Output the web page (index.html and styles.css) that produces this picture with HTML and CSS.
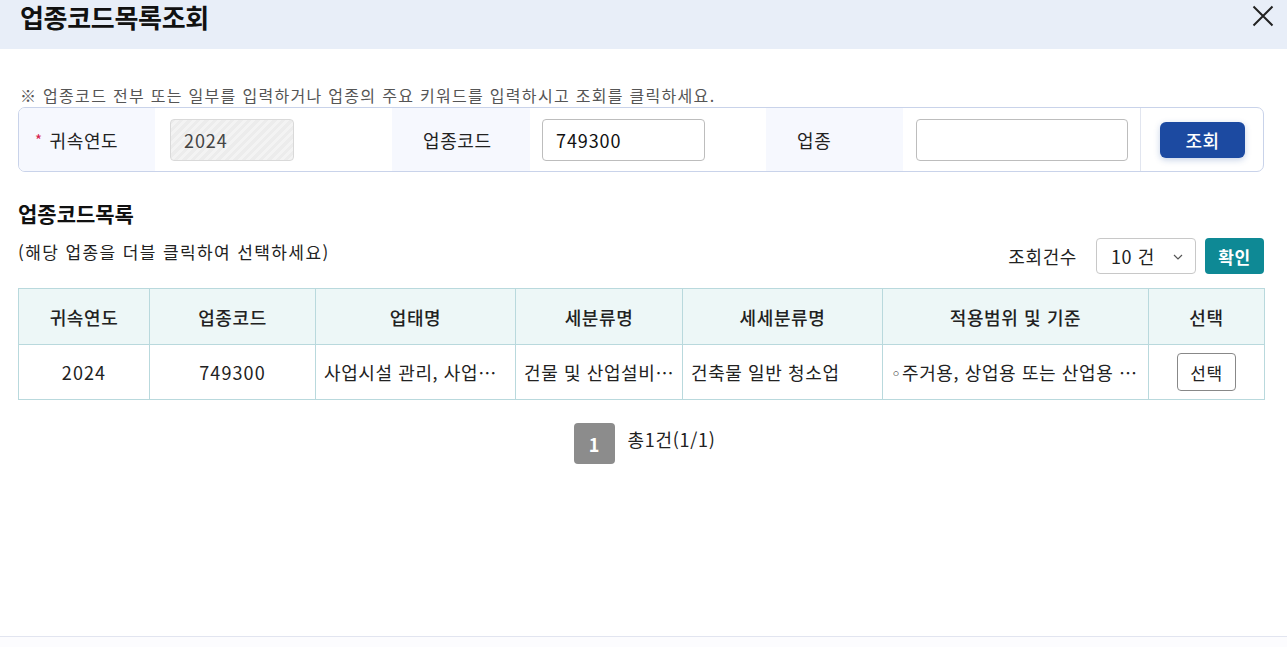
FILE: index.html
```html
<!DOCTYPE html>
<html lang="ko">
<head>
<meta charset="utf-8">
<title>업종코드목록조회</title>
<link rel="stylesheet" href="styles.css">
</head>
<body>
<div class="modal">
  <div class="modal-head">
    <h1 class="modal-title">업종코드목록조회</h1>
    <button class="close-btn" aria-label="닫기">
      <svg width="22" height="22" viewBox="0 0 22 22"><path d="M1.5 1.5 L20.5 20.5 M20.5 1.5 L1.5 20.5" stroke="#222" stroke-width="2" fill="none"/></svg>
    </button>
  </div>
  <div class="modal-body">
    <p class="notice">※ 업종코드 전부 또는 일부를 입력하거나 업종의 주요 키워드를 입력하시고 조회를 클릭하세요.</p>
    <div class="search-box">
      <div class="s-label s-label-first"><span class="req">*</span>귀속연도</div>
      <div class="s-field f1"><div class="inp inp-disabled">2024</div></div>
      <div class="s-label">업종코드</div>
      <div class="s-field f2"><div class="inp inp-code">749300</div></div>
      <div class="s-label">업종</div>
      <div class="s-field f3"><div class="inp inp-name"></div></div>
      <div class="s-btn-cell"><button class="btn-search">조회</button></div>
    </div>

    <h2 class="sec-title">업종코드목록</h2>
    <div class="list-bar">
      <p class="hint">(해당 업종을 더블 클릭하여 선택하세요)</p>
      <div class="list-ctrl">
        <span class="cnt-label">조회건수</span>
        <div class="select">10 건
          <svg class="chev" width="10" height="6" viewBox="0 0 10 6"><path d="M1 1 L5 5 L9 1" stroke="#555" stroke-width="1.2" fill="none"/></svg>
        </div>
        <button class="btn-ok">확인</button>
      </div>
    </div>

    <table class="grid">
      <colgroup>
        <col class="c1"><col class="c2"><col class="c3"><col class="c4"><col class="c5"><col class="c6"><col class="c7">
      </colgroup>
      <thead>
        <tr><th>귀속연도</th><th>업종코드</th><th>업태명</th><th>세분류명</th><th>세세분류명</th><th>적용범위 및 기준</th><th>선택</th></tr>
      </thead>
      <tbody>
        <tr>
          <td class="ctr num">2024</td>
          <td class="ctr num">749300</td>
          <td><div class="ell">사업시설 관리, 사업지원 및 임대 서비스업</div></td>
          <td><div class="ell">건물 및 산업설비 청소업</div></td>
          <td><div class="ell">건축물 일반 청소업</div></td>
          <td><div class="ell"><span class="bullet">◦</span>주거용, 상업용 또는 산업용 건축물 및 구조물 청소</div></td>
          <td class="ctr"><button class="btn-pick">선택</button></td>
        </tr>
      </tbody>
    </table>

    <div class="pager">
      <span class="page-cur">1</span>
      <span class="page-total">총1건(1/1)</span>
    </div>
  </div>
</div>
<div class="footer"></div>
</body>
</html>
```

FILE: styles.css
```css
* { box-sizing: border-box; }
html, body { margin: 0; padding: 0; background: #fff; }
body {
  font-family: "Noto Sans CJK KR", "Noto Sans", sans-serif;
  color: #222;
  overflow: hidden;
}
button { font-family: inherit; cursor: pointer; }

.modal {
  height: 637px;
  border-bottom: 1px solid #e2e5f0;
}
.modal-head {
  height: 49px;
  background: #e8eef8;
  display: flex;
  justify-content: space-between;
  align-items: flex-start;
  padding: 0 13px 0 20px;
}
.modal-title {
  margin: 0;
  font-size: 26px;
  font-weight: 700;
  line-height: 34px;
  color: #111;
  letter-spacing: -0.3px;
}
.close-btn {
  border: 0;
  background: none;
  padding: 0;
  margin-top: 5px;
  width: 22px;
  height: 22px;
}

.modal-body {
  padding: 0 23px 0 18px;
}
.notice {
  margin: 35px 0 0 2px;
  font-size: 16px;
  letter-spacing: 1.3px;
  line-height: 22px;
  color: #555;
}
.search-box {
  margin-top: 1px;
  height: 65px;
  border: 1px solid #c9d3ea;
  border-radius: 7px;
  display: grid;
  grid-template-columns: 136px 237px 138px 236px 137px 237px 1fr;
  overflow: hidden;
}
.s-label {
  background: #f6f8fe;
  display: flex;
  align-items: center;
  padding-left: 31px;
  font-size: 18px;
  letter-spacing: 0.6px;
  color: #222;
}
.s-label-first { padding-left: 16px; }
.req { color: #d6204d; font-size: 15px; margin-right: 7px; }
.s-field {
  display: flex;
  align-items: center;
}
.f1 { padding-left: 15px; }
.f2 { padding-left: 12px; }
.f3 { padding-left: 13px; }
.inp {
  height: 42px;
  border: 1px solid #bdbdbd;
  border-radius: 4px;
  font-size: 18px;
  letter-spacing: 0.9px;
  line-height: 40px;
  padding-left: 13px;
  color: #111;
  background: #fff;
}
.inp-disabled {
  width: 124px;
  color: #444;
  border-color: #d9d9d9;
  background: repeating-linear-gradient(135deg, #ececec 0 3px, #f3f3f3 3px 6px);
}
.inp-code { width: 163px; }
.inp-name { width: 212px; }
.s-btn-cell {
  border-left: 1px solid #e1e5ef;
  display: flex;
  align-items: center;
  padding-left: 19px;
}
.btn-search {
  width: 85px;
  height: 36px;
  border: 0;
  border-radius: 6px;
  background: #1c4aa1;
  color: #fff;
  font-size: 18px;
  letter-spacing: 0.5px;
  font-weight: 500;
  box-shadow: 0 2px 6px rgba(28, 74, 161, 0.25);
}

.sec-title {
  margin: 27px 0 0 0;
  font-size: 21px;
  font-weight: 700;
  line-height: 28px;
  color: #111;
}
.list-bar {
  display: flex;
  justify-content: space-between;
  align-items: flex-start;
  margin-top: 11px;
}
.hint {
  margin: 2px 0 0 0;
  font-size: 17px;
  letter-spacing: 1.4px;
  line-height: 24px;
  color: #222;
}
.list-ctrl {
  display: flex;
  align-items: center;
}
.cnt-label {
  font-size: 18px;
  letter-spacing: 0.6px;
  margin-right: 19px;
  color: #222;
}
.select {
  width: 100px;
  height: 36px;
  border: 1px solid #c8c8c8;
  border-radius: 4px;
  font-size: 18px;
  letter-spacing: 0.6px;
  line-height: 34px;
  padding-left: 14px;
  position: relative;
  color: #222;
}
.chev { position: absolute; right: 12px; top: 15px; }
.btn-ok {
  margin-left: 9px;
  width: 59px;
  height: 36px;
  border: 0;
  border-radius: 4px;
  background: #0e8995;
  color: #fff;
  font-size: 17px;
  letter-spacing: 0.5px;
  font-weight: 700;
}

.grid {
  margin-top: 14px;
  width: 1246px;
  border-collapse: collapse;
  table-layout: fixed;
  font-size: 18px;
  letter-spacing: 0.6px;
}
.c1 { width: 131px; }
.c2 { width: 166px; }
.c3 { width: 200px; }
.c4 { width: 167px; }
.c5 { width: 200px; }
.c6 { width: 266px; }
.c7 { width: 116px; }
.grid th, .grid td {
  border: 1px solid #b9d9dd;
}
.grid th {
  height: 56px;
  background: #edf7f7;
  font-weight: 500;
  color: #222;
}
.grid td {
  height: 55px;
  padding: 0 8px;
  color: #222;
}
.grid td.ctr { text-align: center; }
.grid td.num { letter-spacing: 1.1px; }
.ell {
  white-space: nowrap;
  overflow: hidden;
  text-overflow: ellipsis;
}
.bullet {
  font-family: "DejaVu Sans", sans-serif;
  font-size: 17px;
  letter-spacing: 0;
  margin-right: 1px;
}
.btn-pick {
  width: 59px;
  height: 38px;
  border: 1px solid #888;
  border-radius: 4px;
  background: #fff;
  font-size: 17px;
  letter-spacing: 0.5px;
  color: #222;
}

.pager {
  display: flex;
  justify-content: center;
  align-items: center;
  margin-top: 23px;
  padding-left: 7px;
  gap: 13px;
}
.page-cur {
  width: 41px;
  height: 41px;
  border-radius: 4px;
  background: #8c8c8c;
  color: #fff;
  font-weight: 700;
  font-size: 18px;
  display: flex;
  align-items: center;
  justify-content: center;
}
.page-total {
  font-size: 18px;
  letter-spacing: 0.7px;
  color: #222;
  margin-top: -9px;
}

.footer {
  height: 10px;
  background: #fcfcfe;
}
```
